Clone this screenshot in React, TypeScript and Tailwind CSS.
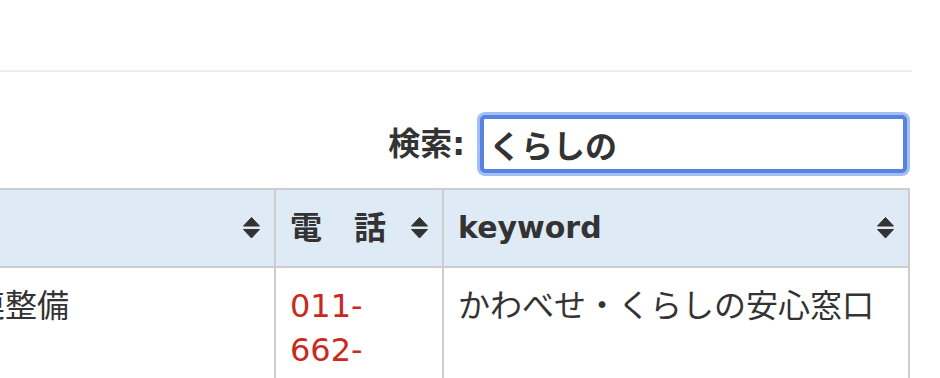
import React from 'react';

const font = { fontFamily: '"DejaVu Sans", "Noto Sans CJK JP", sans-serif' };

function SortIcon() {
  return (
    <svg width="17" height="22" viewBox="0 0 17 22" className="shrink-0 text-[#333]">
      <path d="M8.5 0.5 L16.5 9 L0.5 9 Z" fill="currentColor" strokeLinejoin="round" stroke="currentColor" strokeWidth="1" />
      <path d="M0.5 12.5 L16.5 12.5 L8.5 21 Z" fill="currentColor" strokeLinejoin="round" stroke="currentColor" strokeWidth="1" />
    </svg>
  );
}

function HeadCell({ children, small }: { children?: React.ReactNode; small?: boolean }) {
  return (
    <div className="flex h-[78px] items-center justify-between border-b-2 border-r-2 border-[#cccccc] bg-[#deeaf6] pl-[14px] pr-[14px] font-bold leading-[44px] text-[#333]">
      <span className={'whitespace-nowrap ' + (small ? 'text-[30px]' : 'text-[32px]')}>{children}</span>
      <SortIcon />
    </div>
  );
}

function BodyCell({ children, red }: { children: React.ReactNode; red?: boolean }) {
  return (
    <div
      className={
        'border-r-2 border-[#cccccc] px-[14px] pt-[16px] pb-[16px] text-[32px] leading-[44px] ' +
        (red ? 'text-[#c9291e]' : 'text-[#333]')
      }
    >
      {children}
    </div>
  );
}

export default function App() {
  return (
    <div className="h-[378px] overflow-hidden bg-white" style={font}>
      <div className="h-[70px]" />
      <div className="h-[2px] w-[912px] bg-[#eeeeee]" />

      <div className="mt-[43px] flex w-[910px] items-center justify-end pr-[3px]">
        <label className="text-[32px] font-bold leading-[44px] text-[#333]">検索:</label>
        <input
          readOnly
          defaultValue="くらしの"
          className="ml-[15px] h-[58px] w-[427px] rounded-[5px] border-4 border-[#5682e0] bg-white pl-[5px] text-[32px] font-bold text-[#333] shadow-[0_0_0_3px_#a3bff4] outline-none"
          style={font}
        />
      </div>

      {/* table: first column runs off the left edge */}
      <div className="ml-[-137px] mt-[15px] grid w-[1047px] grid-cols-[413px_168px_466px] border-t-2 border-[#cccccc]">
        <HeadCell />
        <HeadCell>電　話</HeadCell>
        <HeadCell small>keyword</HeadCell>

        <BodyCell>生活関連整備</BodyCell>
        <BodyCell red>011-662-7788</BodyCell>
        <BodyCell>かわべせ・くらしの安心窓口</BodyCell>
      </div>
    </div>
  );
}
